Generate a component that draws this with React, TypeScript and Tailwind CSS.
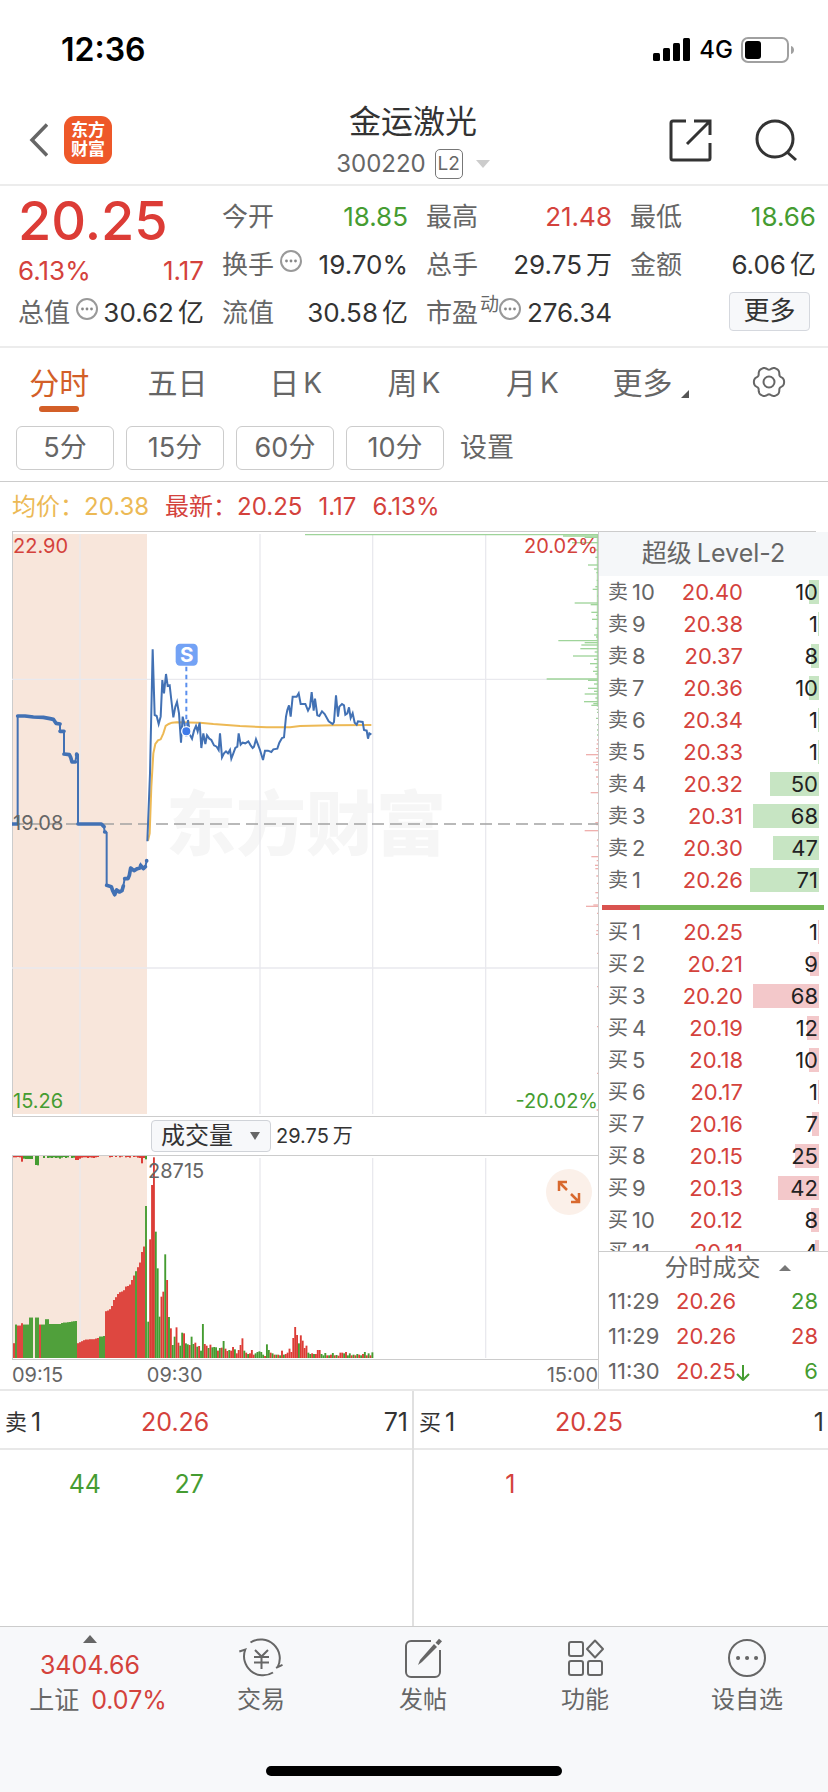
import { useState } from 'react';
import type { ReactNode } from 'react';

type Level = { label: string; price: string; qty: number };

const ASKS: Level[] = [
  { label: '卖10', price: '20.40', qty: 10 },
  { label: '卖9', price: '20.38', qty: 1 },
  { label: '卖8', price: '20.37', qty: 8 },
  { label: '卖7', price: '20.36', qty: 10 },
  { label: '卖6', price: '20.34', qty: 1 },
  { label: '卖5', price: '20.33', qty: 1 },
  { label: '卖4', price: '20.32', qty: 50 },
  { label: '卖3', price: '20.31', qty: 68 },
  { label: '卖2', price: '20.30', qty: 47 },
  { label: '卖1', price: '20.26', qty: 71 },
];

const BIDS: Level[] = [
  { label: '买1', price: '20.25', qty: 1 },
  { label: '买2', price: '20.21', qty: 9 },
  { label: '买3', price: '20.20', qty: 68 },
  { label: '买4', price: '20.19', qty: 12 },
  { label: '买5', price: '20.18', qty: 10 },
  { label: '买6', price: '20.17', qty: 1 },
  { label: '买7', price: '20.16', qty: 7 },
  { label: '买8', price: '20.15', qty: 25 },
  { label: '买9', price: '20.13', qty: 42 },
  { label: '买10', price: '20.12', qty: 8 },
  { label: '买11', price: '20.11', qty: 4 },
];

const TRADES = [
  { time: '11:29', price: '20.26', qty: 28, side: 'sell', down: false },
  { time: '11:29', price: '20.26', qty: 28, side: 'buy', down: false },
  { time: '11:30', price: '20.25', qty: 6, side: 'sell', down: true },
];

const TABS = ['分时', '五日', '日K', '周K', '月K', '更多'];
const MINUTES = ['5分', '15分', '60分', '10分'];

// Call auction, 09:15 - 09:25
const AUCTION_LINE =
  '36,912 53,912 53,588 75,588 100,591 130,592 150,596 160,598 168,608 180,612 180,634 192,634 192,702 208,704 212,712 216,726 226,726 230,702 234,704 234,912 304,912 312,920 314,936 320,938 320,1096 334,1100 338,1112 344,1124 350,1110 358,1116 366,1110 370,1098 374,1076 384,1076 388,1066 392,1044 402,1052 412,1046 420,1044 422,1034 430,1046 436,1040 440,1022';

const AUCTION_TICKS = [
  'M36 912H53',
  'M53 588H75L100 591L130 592L150 596L160 598L168 610L180 612',
  'M180 634H192',
  'M192 702L208 704L212 712L216 726H226M230 702V706',
  'M234 912H304L312 920',
  'M314 936H316M320 1096L334 1100L338 1112L344 1124L350 1110L358 1116L366 1112L370 1098M374 1076H384L388 1066L392 1044L402 1052L412 1046L420 1044L422 1036L430 1046L436 1040M440 1022V1023',
].join('');

const PRICE_LINE =
  '442,964 450,760 458,388 464,585 470,588 476,612 482,590 487,480 492,520 498,462 503,498 509,496 514,540 520,592 526,560 531,546 537,580 543,668 548,590 553,610 559,650 564,600 570,645 576,656 582,632 588,618 593,634 599,608 604,684 610,640 616,672 621,646 628,656 634,660 642,676 650,680 656,690 660,640 666,712 672,700 678,694 684,700 690,690 694,716 700,700 706,684 712,680 716,640 722,674 728,668 736,670 745,664 752,676 758,684 762,680 768,658 774,674 780,690 789,720 795,692 804,692 814,696 820,688 832,686 838,668 846,654 852,652 858,590 862,570 867,556 872,590 878,530 890,530 896,520 902,552 916,552 924,572 930,560 935,516 941,572 945,536 952,586 958,588 966,574 974,582 986,604 998,612 1002,606 1008,526 1014,590 1018,560 1026,552 1032,556 1036,584 1042,580 1047,562 1052,594 1058,580 1064,608 1070,614 1074,604 1088,606 1092,630 1100,632 1104,656 1108,640 1114,644';

const AVERAGE_LINE =
  '444,962 449,940 454,800 460,700 466,672 474,661 482,658 490,640 497,618 506,612 516,608 530,607 600,608 640,612 720,618 800,622 870,622 900,618 1000,616 1114,615';

// [y, length] of resting orders along the right edge
const SELL_DEPTH = [
  [44, 879], [48, 105], [52, 40], [68, 78], [90, 10], [112, 8], [135, 30], [147, 12], [158, 5], [181, 4],
  [200, 8], [208, 16], [228, 3], [249, 70], [254, 22], [277, 20], [286, 6], [298, 18], [325, 7], [345, 12],
  [351, 6], [362, 119], [368, 40], [375, 50], [386, 53], [396, 10], [408, 75], [418, 12], [431, 24], [442, 8],
  [454, 15], [462, 8], [477, 154], [481, 30], [492, 12], [505, 30], [514, 12], [522, 40], [534, 8], [545, 42],
  [551, 14], [556, 20], [568, 4], [577, 3], [595, 6], [614, 3], [630, 3], [645, 3],
];

const BUY_DEPTH = [
  [660, 3], [672, 4], [686, 6], [694, 4], [704, 36], [714, 6], [727, 15], [734, 6], [750, 9], [771, 6],
  [792, 3], [818, 22], [850, 3], [880, 3], [908, 8], [914, 5], [932, 40], [960, 3], [978, 4], [1010, 20],
  [1022, 4], [1036, 9], [1046, 8], [1068, 5], [1090, 3], [1118, 8], [1134, 4], [1155, 14], [1159, 36], [1180, 3],
  [1214, 4], [1232, 5], [1243, 6], [1300, 3], [1400, 3], [1520, 3], [1660, 3], [1770, 4],
];

// Bar heights: positive is up, negative is down, zero leaves a gap
const AUCTION_VOLUME = [
  44, -100, 97, 97, 104, -100, -100, -100, -121, -121, 0, -121, -121, 100, -100, -100, -116, -116, -102, -102, -102,
  -102, -102, -102, -105, -106, -106, -107, -108, -109, -110, -111, 44, 47, 50, 53, 55, 55, 56, 56, 56, 58, 60, -64,
  -64, -66, 140, 142, 146, 156, 174, 182, 192, 197, 199, 203, 214, 216, 220, 234, 247, -260, 272, 286, 318, 334, -456,
];

const VOLUME = [
  -109, 356, 519, 602, -379, -269, -124, 184, 199, -311, 234, -123, 89, -39, -64, 92, 46, -37, -76, 74, -44, -41, 39,
  -64, -42, 46, -34, 36, -22, -102, 42, 37, -30, 40, -32, -33, -32, 22, -30, 31, -51, 28, 21, -24, 22, 33, -26, 14, 24,
  39, 59, -22, 16, -12, 14, 24, 10, -14, -18, -20, -18, -10, 6, -41, -24, 16, -14, 10, -10, 10, -8, 22, -10, 12, 16,
  28, 18, 60, 93, 69, -44, 68, 52, 30, 37, -16, -12, 14, -12, 12, 24, 24, -12, -8, -15, 8, -8, 10, -15, 8, -9, 7,
  16, 16, -14, 18, -8, -14, 8, -10, 8, -12, 10, -8, 12, -18, 8, -14, 8, -17,
];

const HANGING = [
  4, 4, 3, 4, 17, -8, -9, -9, -9, -9, 0, -27, -28, 0, 0, -6, 0, -6, -5, -6, -4, -6, -5, -8, -5, -3, -6, -4, 0, -6, -5,
  12, 12, 8, 5, 4, 4, 6, 4, 5, 6, 4, 3, 0, 0, 0, 0, 0, 4, 3, 0, 3, 0, 4, 2, 0, 4, 3, 5, 0, 3, 2, 5, 6, 22, 6, -10,
];

const RED = '#dc3c36';
const GREEN = '#459c31';

function gearPath() {
  const points: string[] = [];
  for (let i = 0; i < 120; i++) {
    const a = (i / 120) * Math.PI * 2;
    const r = 14 + 1.4 * Math.cos(6 * a) - 0.3 * Math.cos(12 * a);
    points.push(`${(17 + r * Math.cos(a)).toFixed(2)} ${(17 + r * Math.sin(a)).toFixed(2)}`);
  }
  return `M${points.join('L')}Z`;
}

function StatusBar() {
  return (
    <div className="flex h-24 items-start justify-between pt-[34px] pr-[33px] pl-[61px]">
      <span className="text-[32px] leading-8 font-semibold text-black">12:36</span>
      <div className="flex h-8 items-center gap-2 text-black">
        <svg className="h-6 w-[38px]" viewBox="0 0 38 24">
          <rect x="0" y="15" width="7" height="8" rx="1.5" />
          <rect x="10" y="10" width="7" height="13" rx="1.5" />
          <rect x="20" y="5" width="7" height="18" rx="1.5" />
          <rect x="30" y="0" width="7" height="23" rx="1.5" />
        </svg>
        <span className="text-[24px] leading-8 font-medium">4G</span>
        <svg className="h-[26px] w-[54px]" viewBox="0 0 54 26">
          <rect x="1" y="1" width="46" height="24" rx="6" fill="none" stroke="#a0a0a0" strokeWidth="2" />
          <rect x="4" y="4" width="16" height="18" rx="3" />
          <path d="M50 9c4 1 4 7 0 8z" fill="#a0a0a0" />
        </svg>
      </div>
    </div>
  );
}

function Header() {
  return (
    <header className="flex h-[90px] items-center justify-between border-b-2 border-[#ececec] pr-[30px] pl-7">
      <div className="flex w-32 items-center gap-4">
        <button aria-label="返回">
          <svg className="h-9 w-5" viewBox="0 0 20 36" fill="none" stroke="#666" strokeWidth="3.5">
            <path d="M19 2.500 L4 18 L19 33.500" />
          </svg>
        </button>
        <div className="flex size-12 flex-col items-center justify-center rounded-[11px] bg-[#ee5829] text-[17px] leading-[19px] font-bold text-white">
          <span>东方</span>
          <span>财富</span>
        </div>
      </div>
      <div className="flex flex-col items-center">
        <h1 className="text-[32px] leading-[42px] text-[#333]">金运激光</h1>
        <button className="mt-[6px] flex items-center gap-[9px] text-[24px] leading-[30px] text-[#666]">
          300220
          <span className="flex h-[30px] w-7 items-center justify-center rounded-[5px] border border-[#777] text-[19px]">
            L2
          </span>
          <svg className="ml-1 h-2 w-[14px]" viewBox="0 0 14 8">
            <path d="M0 0h14l-7 8z" fill="#ccc" />
          </svg>
        </button>
      </div>
      <div className="flex w-32 items-center justify-end gap-[43px]">
        <button aria-label="分享">
          <svg className="size-[43px]" viewBox="0 0 43 43" fill="none" stroke="#333" strokeWidth="3">
            <path d="M17 2H4a2 2 0 0 0-2 2v35a2 2 0 0 0 2 2h35a2 2 0 0 0 2-2V24M25 2h16v14M41 2L18 25" />
          </svg>
        </button>
        <button aria-label="搜索">
          <svg className="size-[43px]" viewBox="0 0 43 43" fill="none" stroke="#333" strokeWidth="3">
            <circle cx="20" cy="20" r="18" />
            <path d="M32 33l9 8" />
          </svg>
        </button>
      </div>
    </header>
  );
}

function InfoDot() {
  return (
    <svg className="-mt-2 size-[22px] shrink-0" viewBox="0 0 22 22" fill="#888">
      <circle cx="11" cy="11" r="10" fill="none" stroke="#999" strokeWidth="2" />
      <circle cx="6.500" cy="11" r="1.400" />
      <circle cx="11" cy="11" r="1.400" />
      <circle cx="15.500" cy="11" r="1.400" />
    </svg>
  );
}

type StatProps = { label: string; value: string; unit?: string; tone?: string; children?: ReactNode };

function Stat({ label, value, unit, tone = 'text-[#333]', children }: StatProps) {
  return (
    <div className="flex h-12 items-center justify-between whitespace-nowrap">
      <dt className="flex items-center text-[#666]">
        <span>{label}</span>
        {children}
      </dt>
      <dd className={tone}>
        {value}
        {unit && <span className="ml-1">{unit}</span>}
      </dd>
    </div>
  );
}

function Quote() {
  return (
    <section className="grid h-[162px] grid-cols-4 gap-[18px] border-b-2 border-[#ececec] pt-[7px] pr-3 pl-[18px] text-[26px] leading-8">
      <dl>
        <dd className="flex h-14 items-center text-[54px] leading-[54px] font-medium text-[#dc3c36]">20.25</dd>
        <dd className="flex h-10 items-end justify-between leading-9 text-[#d4423c]">
          <span>6.13%</span>
          <span>1.17</span>
        </dd>
        <Stat label="总值" value="30.62" unit="亿">
          <span className="w-[6px]" />
          <InfoDot />
        </Stat>
      </dl>
      <dl>
        <Stat label="今开" value="18.85" tone="text-[#459c31]" />
        <Stat label="换手" value="19.70%">
          <span className="w-[6px]" />
          <InfoDot />
        </Stat>
        <Stat label="流值" value="30.58" unit="亿" />
      </dl>
      <dl>
        <Stat label="最高" value="21.48" tone="text-[#d4423c]" />
        <Stat label="总手" value="29.75" unit="万" />
        <Stat label="市盈" value="276.34">
          <span className="-mt-4 ml-[2px] text-[19px]">动</span>
          <InfoDot />
        </Stat>
      </dl>
      <dl>
        <Stat label="最低" value="18.66" tone="text-[#459c31]" />
        <Stat label="金额" value="6.06" unit="亿" />
        <div className="flex h-11 items-center justify-end pr-[6px]">
          <button className="h-[39px] w-[81px] rounded-[4px] border border-[#d5d8de] bg-[#f7f8fa] text-[#333]">
            更多
          </button>
        </div>
      </dl>
    </section>
  );
}

function ChartTabs() {
  const [active, setActive] = useState('分时');

  return (
    <nav className="border-b border-[#ccc] pb-[11px] text-[#666]">
      <div className="grid grid-cols-7">
        {TABS.map((tab) => (
          <button
            key={tab}
            onClick={() => setActive(tab)}
            className={`flex h-16 flex-col items-center pt-3 text-[30px] leading-[46px] whitespace-nowrap ${
              active === tab ? 'text-[#d35f28]' : ''
            }`}
          >
            <span className="flex items-end">
              {tab.endsWith('K') ? (
                <>
                  {tab.slice(0, 1)}
                  <span className="ml-1 text-[28px]">K</span>
                </>
              ) : (
                tab
              )}
              {tab === '更多' && (
                <svg className="mb-2 ml-2 size-2" viewBox="0 0 8 8">
                  <path d="M8 0v8H0z" fill="#555" />
                </svg>
              )}
            </span>
            {active === tab && <span className="h-[6px] w-10 rounded-full bg-[#d35f28]" />}
          </button>
        ))}
        <button aria-label="图表设置" className="flex h-16 items-center justify-center pt-1">
          <svg className="size-[34px]" viewBox="0 0 34 34" fill="none" stroke="#666" strokeWidth="2">
            <path d={gearPath()} />
            <circle cx="17" cy="17" r="5.500" />
          </svg>
        </button>
      </div>
      <div className="mt-[14px] flex items-center gap-3 pl-4 text-[27px] leading-8">
        {MINUTES.map((m) => (
          <button key={m} className="h-11 w-[98px] rounded-[6px] border border-[#ccc]">
            {m}
          </button>
        ))}
        <button className="pl-1">设置</button>
      </div>
    </nav>
  );
}

function Legend() {
  return (
    <div className="mx-3 flex h-[50px] items-center border-b border-[#ccc] text-[24px] leading-8 text-[#d4423c]">
      <span className="text-[#ecb955]">均价：</span>
      <span className="text-[#ecb955]">20.38</span>
      <span className="ml-4">最新：</span>
      <span>20.25</span>
      <span className="ml-4">1.17</span>
      <span className="ml-4">6.13%</span>
    </div>
  );
}

function PriceChart() {
  return (
    <div className="relative h-[584px] border-l border-[#ccc] text-[20px] leading-6">
      <div className="absolute inset-y-0 right-0 -left-px">
        <svg className="size-full" viewBox="36 36 1758 1752" preserveAspectRatio="none" fill="none">
          <rect x="39" y="42" width="402" height="1740" fill="#f8e6db" />
        </svg>
      </div>
      <div className="absolute top-[251px] left-[153px] text-[70px] leading-[84px] font-black whitespace-nowrap text-[#f6f6f6]">
        东方财富
      </div>
      <div className="absolute inset-y-0 right-0 -left-px">
        <svg className="size-full" viewBox="36 36 1758 1752" preserveAspectRatio="none" fill="none">
          <path
            d="M240 42V1782M780 42V1782M1118 42V1782M1457 42V1782M36 478H1794M36 1344H1794"
            stroke="#e9e9ee"
            strokeWidth="4"
          />
          {SELL_DEPTH.map(([y, len]) => (
            <path key={y} d={`M${1794 - len} ${y}H1794`} stroke="#9fd49a" strokeWidth="4" />
          ))}
          <path d="M1792 42V560" stroke="#9fd49a" strokeWidth="3" />
          {BUY_DEPTH.map(([y, len]) => (
            <path key={y} d={`M${1794 - len} ${y}H1794`} stroke="#efb0ae" strokeWidth="4" />
          ))}
          <path d="M36 912H1794" stroke="#a3a3a3" strokeWidth="5" strokeDasharray="36 18" />
          <polyline points={AUCTION_LINE} stroke="#4271b4" strokeWidth="6" />
          <path d={AUCTION_TICKS} stroke="#4271b4" strokeWidth="11" strokeLinecap="round" strokeLinejoin="round" />
          <polyline points={AVERAGE_LINE} stroke="#edb955" strokeWidth="6" />
          <polyline points={PRICE_LINE} stroke="#4271b4" strokeWidth="6" />
          <path d="M559 440V614" stroke="#5b8fee" strokeWidth="6" strokeDasharray="14 10" />
          <circle cx="559" cy="634" r="14" fill="#3f7bea" stroke="#fff" strokeWidth="4" />
          <rect x="527" y="371" width="66" height="66" rx="13" fill="#73a2f5" />
          <text x="560" y="426" textAnchor="middle" fill="#fff" fontSize="62" fontWeight="700">
            S
          </text>
        </svg>
      </div>
      <span className="absolute top-[2px] left-0 text-[#d4423c]">22.90</span>
      <span className="absolute top-[2px] right-0 text-[#d4423c]">20.02%</span>
      <span className="absolute top-[279px] left-0 text-[#666]">19.08</span>
      <span className="absolute bottom-[3px] left-0 text-[#459c31]">15.26</span>
      <span className="absolute right-0 bottom-[3px] text-[#459c31]">-20.02%</span>
    </div>
  );
}

function VolumeChart() {
  return (
    <div className="relative h-[203px] border-l border-[#ccc]">
      <div className="absolute inset-y-0 right-0 -left-px">
        <svg className="size-full" viewBox="36 228 1758 609" preserveAspectRatio="none">
          <rect x="39" y="228" width="402" height="606" fill="#f8e6db" />
          <path d="M240 234V834M780 234V834M1118 234V834M1457 234V834" stroke="#e9e9ee" strokeWidth="4" />
          {HANGING.map((h, i) => (
            <rect key={i} x={39 + i * 6} y={228} width={6} height={Math.abs(h)} fill={h > 0 ? RED : GREEN} />
          ))}
          {AUCTION_VOLUME.map((h, i) => (
            <g key={i} fill={h > 0 ? RED : GREEN}>
              <rect x={39 + i * 6} y={834 - Math.abs(h)} width={6} height={Math.abs(h)} fillOpacity="0.8" />
              <rect x={40 + i * 6} y={834 - Math.abs(h)} width={4} height={Math.abs(h)} />
            </g>
          ))}
          {VOLUME.map((h, i) => (
            <rect
              key={i}
              x={442 + i * 5.65}
              y={834 - Math.abs(h)}
              width={5.65}
              height={Math.abs(h)}
              fill={h > 0 ? RED : GREEN}
            />
          ))}
        </svg>
      </div>
      <span className="absolute top-[3px] left-[135px] text-[20px] leading-6 text-[#666]">28715</span>
      <button
        aria-label="全屏"
        className="absolute top-[13px] right-[6px] flex size-[46px] items-center justify-center rounded-full bg-[#fbf0e9]"
      >
        <svg className="size-6" viewBox="0 0 24 24" fill="none" stroke="#d8692f" strokeWidth="2.500">
          <path d="M10 2H2v9M2 2l8 8M14 22h8v-9M22 22l-8-8" />
        </svg>
      </button>
    </div>
  );
}

function BookRows({ levels, bar }: { levels: Level[]; bar: string }) {
  return (
    <table className="w-full table-fixed text-[22px] leading-6">
      <tbody>
        {levels.map((l) => (
          <tr key={l.label} className="h-8">
            <th scope="row" className="w-[64px] pl-[9px] text-left font-normal text-[#666]">
              <span className="flex items-center gap-1">
                <span className="text-[20px]">{l.label.slice(0, 1)}</span>
                <span>{l.label.slice(1)}</span>
              </span>
            </th>
            <td className="w-[80px] text-right text-[#d4423c]">{l.price}</td>
            <td className="relative pr-[10px] text-right text-[#222]">
              <span
                className={`absolute top-1 right-[9px] h-6 ${bar}`}
                style={{ width: Math.round(l.qty * 0.97) }}
              />
              <span className="relative">{l.qty}</span>
            </td>
          </tr>
        ))}
      </tbody>
    </table>
  );
}

function OrderBook() {
  return (
    <aside className="flex w-[230px] shrink-0 flex-col border-l border-[#ccc]">
      <h2 className="flex h-11 items-center justify-center gap-[5px] bg-[#f5f7f9] text-[25px] text-[#666]">
        <span>超级</span>
        <span>Level-2</span>
      </h2>
      <BookRows levels={ASKS} bar="bg-[#c7e5c3]" />
      <div className="mt-[9px] mr-1 mb-[6px] ml-[3px] flex h-[5px] bg-[#75b859]">
        <div className="w-[17%] bg-[#d9534f]" />
      </div>
      <div className="h-[335px] overflow-hidden">
        <BookRows levels={BIDS} bar="bg-[#f3c8ca]" />
      </div>
      <div className="border-t border-[#ccc]">
        <button className="flex h-[31px] w-full items-center justify-center gap-[18px] pl-7 text-[24px] leading-[31px] text-[#666]">
          分时成交
          <svg className="h-[6px] w-3" viewBox="0 0 12 6">
            <path d="M0 6h12L6 0z" fill="#777" />
          </svg>
        </button>
        <table className="w-full table-fixed text-[22px] leading-6">
          <tbody>
            {TRADES.map((t, i) => (
              <tr key={i} className="h-[35px]">
                <td className="w-[77px] pl-[9px] text-[#666]">{t.time}</td>
                <td className="w-[80px] text-[#d4423c]">
                  <span className="flex items-center">
                    {t.price}
                    {t.down && (
                      <svg className="mt-1 h-4 w-[14px] shrink-0" viewBox="0 0 14 16" fill="none" stroke={GREEN} strokeWidth="2">
                        <path d="M7 0v15M1 9l6 6 6-6" />
                      </svg>
                    )}
                  </span>
                </td>
                <td className={`pr-[10px] text-right ${t.side === 'buy' ? 'text-[#d4423c]' : 'text-[#459c31]'}`}>
                  {t.qty}
                </td>
              </tr>
            ))}
          </tbody>
        </table>
      </div>
    </aside>
  );
}

type QueueProps = { side: string; price: string; total: number; orders: number[]; tone: string };

function Queue({ side, price, total, orders, tone }: QueueProps) {
  return (
    <div>
      <div className="flex h-[59px] items-center border-b-2 border-[#e8e8e8] pt-1 pr-1 pl-[5px] text-[#333]">
        <span className="flex w-[136px] items-center gap-1">
          <span className="text-[22px]">{side}</span>
          <span>1</span>
        </span>
        <span className="flex-1 text-[#d4423c]">{price}</span>
        <span>{total}</span>
      </div>
      <div className={`grid h-[176px] grid-cols-4 items-start pt-[18px] text-right ${tone}`}>
        {orders.map((o) => (
          <span key={o} className="pr-[2px]">
            {o}
          </span>
        ))}
      </div>
    </div>
  );
}

function NavItem({ label, children }: { label: string; children: ReactNode }) {
  return (
    <button className="flex flex-1 flex-col items-center pt-[11px] text-[24px] leading-[34px] text-[#666]">
      <svg className="mb-[5px] h-[40px] w-[44px]" viewBox="0 0 44 40" fill="none" stroke="#666" strokeWidth="2">
        {children}
      </svg>
      {label}
    </button>
  );
}

function BottomBar() {
  return (
    <footer className="border-t border-[#ccc] bg-[#f7f8fa] pb-4">
      <div className="flex h-[139px]">
        <button className="flex w-[180px] flex-col items-center pt-2 text-[25px] leading-[35px] text-[#d4423c]">
          <svg className="mb-[5px] h-2 w-[14px]" viewBox="0 0 14 8">
            <path d="M0 8h14L7 0z" fill="#666" />
          </svg>
          <span>3404.66</span>
          <span className="pl-4">
            <span className="mr-3 text-[#666]">上证</span>0.07%
          </span>
        </button>
        <NavItem label="交易">
          <path d="M11.500 4.500A19 19 0 0 1 38.500 29.500M37 29.800l6.500-3M34 34.500A19 19 0 0 1 6.300 11.500l-6 2" />
          <path d="M16 12l6.500 6.500 6.500-6.500M15 19h15M15 24.500h15M22.500 18v13" />
        </NavItem>
        <NavItem label="发帖">
          <path d="M30 3H10a5 5 0 0 0-5 5v26a5 5 0 0 0 5 5h24a5 5 0 0 0 5-5V12" />
          <path d="M17 27l2-5L33 6l3 3-15 15z" fill="#666" stroke="none" />
          <path d="M36 6l3.500-4" strokeWidth="4" />
        </NavItem>
        <NavItem label="功能">
          <rect x="6" y="4" width="14" height="14" rx="2" />
          <rect x="6" y="23" width="14" height="14" rx="2" />
          <rect x="25" y="23" width="14" height="14" rx="2" />
          <path d="M32 2.500l8 8.500-8 8.500-8-8.500z" strokeLinejoin="round" />
        </NavItem>
        <NavItem label="设自选">
          <circle cx="22" cy="20" r="18" />
          <path d="M13 20h.1M22 20h.1M31 20h.1" strokeWidth="4" strokeLinecap="round" />
        </NavItem>
      </div>
      <div className="mx-auto h-[10px] w-[296px] rounded-full bg-black" />
    </footer>
  );
}

export default function App() {
  return (
    <div className="w-full bg-white font-['Inter','Noto_Sans_CJK_SC',sans-serif]">
      <StatusBar />
      <Header />
      <Quote />
      <ChartTabs />
      <Legend />

      <div className="flex border-b-2 border-[#e8e8e8]">
        <div className="min-w-0 flex-1 pl-3">
          <PriceChart />
          <div className="flex h-10 items-center gap-[5px] border-y border-[#ccc] pl-[139px] text-[20px] text-[#333]">
            <button className="flex h-8 w-[120px] items-center justify-between rounded-[4px] border border-[#d0d3d8] bg-[#f7f8fa] pr-[10px] pl-[9px] text-[24px] leading-[30px]">
              成交量
              <svg className="h-2 w-[10px]" viewBox="0 0 10 8">
                <path d="M0 0h10L5 8z" fill="#666" />
              </svg>
            </button>
            <span>
              29.75<span className="ml-1">万</span>
            </span>
          </div>
          <VolumeChart />
          <div className="flex h-[30px] border-t border-[#ccc] text-[20px] leading-[30px] text-[#666]">
            <span className="w-[23%]">09:15</span>
            <span className="flex-1">09:30</span>
            <span>15:00</span>
          </div>
        </div>
        <OrderBook />
      </div>

      <div className="grid grid-cols-2 divide-x-2 divide-[#e0e0e0] text-[25px] leading-8">
        <Queue side="卖" price="20.26" total={71} orders={[44, 27]} tone="text-[#459c31]" />
        <Queue side="买" price="20.25" total={1} orders={[1]} tone="text-[#d4423c]" />
      </div>

      <BottomBar />
    </div>
  );
}
